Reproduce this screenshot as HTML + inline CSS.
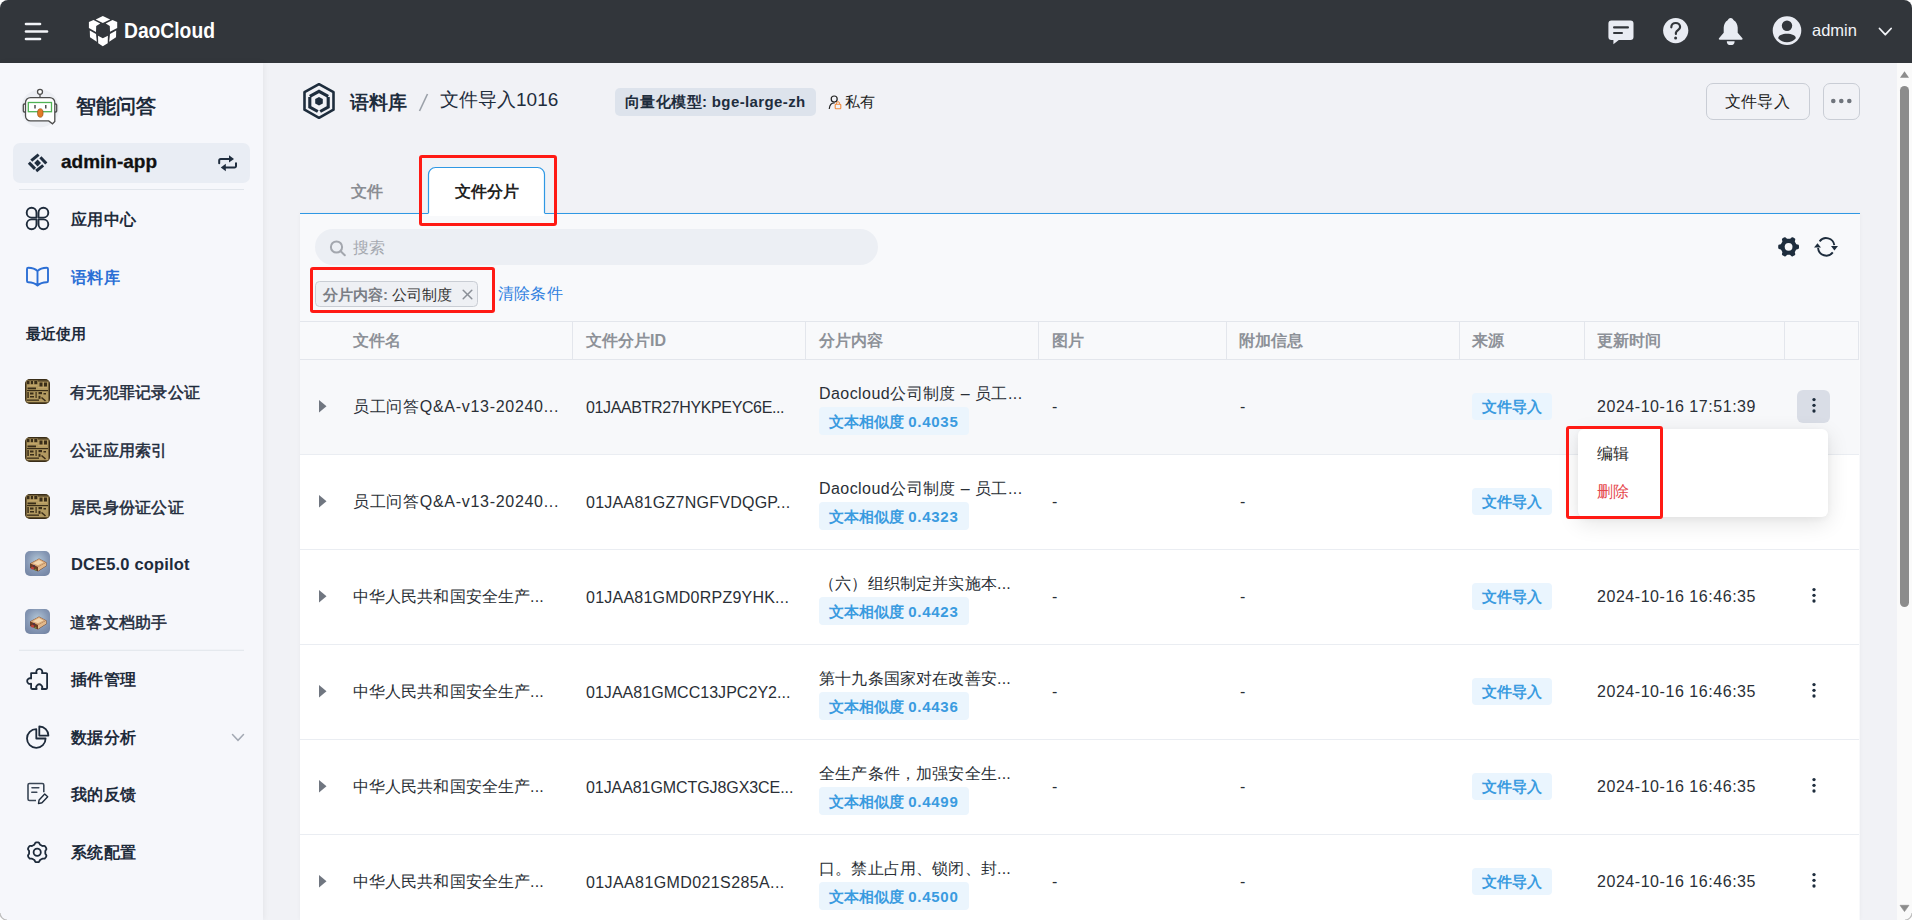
<!DOCTYPE html>
<html><head><meta charset="utf-8">
<style>
*{box-sizing:border-box;margin:0;padding:0}
html,body{width:1912px;height:920px;overflow:hidden;background:#fff;font-family:"Liberation Sans",sans-serif;color:#1f2d3d}
.a{position:absolute;white-space:nowrap}
#hdr{position:absolute;left:0;top:0;width:1912px;height:63px;background:#32363b;border-radius:8px 8px 0 0}
#side{position:absolute;left:0;top:63px;width:263px;height:857px;background:#f6f7fb;box-shadow:1px 0 6px rgba(0,0,0,.06)}
#main{position:absolute;left:263px;top:63px;width:1634px;height:857px;background:#f1f2f6}
#sb{position:absolute;left:1897px;top:63px;width:15px;height:857px;background:#fafafa}
.t{position:absolute;white-space:nowrap;line-height:20px}
</style></head><body>
<div id="hdr">
<svg class="a" style="left:0;top:0" width="1912" height="63" viewBox="0 0 1912 63">
<g stroke="#f2f4f8" stroke-width="2.6" stroke-linecap="round">
<line x1="26" y1="24" x2="40" y2="24"/><line x1="26" y1="31.5" x2="47" y2="31.5"/><line x1="26" y1="39" x2="40" y2="39"/>
</g>
<g fill="#ffffff">
<polygon points="102.8,15.9 110.2,19.4 102.8,22.9 95.7,19.4"/>
<polygon points="88.9,21.9 93.5,20.1 100.3,23.4 96.2,25.9 96,32 88.9,28.1"/>
<polygon points="117.2,21.9 112.5,20.1 105.7,23.4 109.8,26 110,31.8 117.2,28.1"/>
<polygon points="89.8,30.4 96,33.9 96.8,41.8 90,37.2"/>
<polygon points="116.2,30.4 110,33.9 109.2,41.8 116,37.2"/>
<polygon points="98,35.8 102.8,38.2 107.9,35.8 107.7,43.2 102.8,46.3 98.2,43.2"/>
</g>
<g fill="#e9ecf3">
<path d="M1611.4 20.5h19.1a3 3 0 0 1 3 3v13.5a3 3 0 0 1-3 3h-11.7l-5.4 4.2v-4.2h-2a3 3 0 0 1-3-3v-13.5a3 3 0 0 1 3-3z"/>
<circle cx="1675.7" cy="30.6" r="12.6"/>
<path d="M1730.7 18c-1.6 0-2.5 1.3-3.3 2.6c-2 1.2-3.5 3.6-3.7 7v5.2l-4.7 5.5c-.5.7-.1 1.5.8 1.5h21.8c.9 0 1.3-.8.8-1.5l-4.7-5.5v-5.2c-.2-3.4-1.7-5.8-3.7-7c-.8-1.3-1.7-2.6-3.3-2.6z"/>
<path d="M1726.8 41.2h7.8a3.9 3.9 0 0 1-7.8 0z"/>
<circle cx="1787" cy="30.6" r="14.3"/>
</g>
<g fill="#32363b">
<rect x="1613" y="26.3" width="16" height="2.3" rx="1.1"/>
<rect x="1613" y="31.9" width="10" height="2.1" rx="1"/>
<circle cx="1787" cy="25.8" r="5.2"/>
<path d="M1778.2 38.2c0-2.6 4-4.4 8.8-4.4s8.8 1.8 8.8 4.4c-2.2 2.6-5.3 4-8.8 4s-6.6-1.4-8.8-4z"/>
<circle cx="1675.6" cy="37.9" r="1.5"/>
</g>
<path d="M1671.3 27.3c0-2.7 2-4.3 4.4-4.3s4.4 1.6 4.4 4c0 2.9-3.4 3.2-4.2 5.8v1.2" fill="none" stroke="#32363b" stroke-width="2.2" stroke-linecap="round"/>
<path d="M1879.5 28.5l5.8 6.2 5.8-6.2" fill="none" stroke="#f2f4f8" stroke-width="1.8" stroke-linecap="round" stroke-linejoin="round"/>
</svg>
<div class="t" style="left:124px;top:19px;font-size:22px;line-height:24px;font-weight:bold;color:#fff;transform:scaleX(.875);transform-origin:0 0;letter-spacing:0">DaoCloud</div>
<div class="t" style="left:1812px;top:20px;font-size:16.5px;line-height:20px;color:#f2f4f8">admin</div>
</div>
<div id="main"></div>
<div id="mainc" style="position:absolute;left:0;top:0;width:1912px;height:920px">
<div class="a" style="left:300px;top:213px;width:1560px;height:707px;background:#f8f9fb;box-shadow:0 0 4px rgba(0,0,0,.04)"></div>
<svg class="a" style="left:0;top:0" width="1912" height="920" viewBox="0 0 1912 920">
<path d="M319 84.2L333.5 92.1V109.7L319 117.8L304.5 109.7V92.1Z" fill="none" stroke="#1e2d3d" stroke-width="2.6" stroke-linejoin="round"/>
<g fill="none" stroke="#1e2d3d" stroke-width="3.1">
<path d="M309.8 96.3L319 91.3L328.2 96.3"/>
<path d="M309.8 97V107L317.8 111.5"/>
<path d="M328.2 97V107L320.2 111.5"/>
</g>
<polygon points="319,96.9 322.8,99.1 322.8,103.4 319,105.6 315.2,103.4 315.2,99.1" fill="#1e2d3d"/>
<line x1="427.5" y1="94" x2="419.5" y2="111" stroke="#9aa0a8" stroke-width="1.6"/>
<g fill="none" stroke="#222" stroke-width="1.2" stroke-linecap="round">
<circle cx="834.2" cy="99" r="3"/>
<path d="M829.3 108.5c.5-3.6 2.3-5.6 4.9-5.6"/>
</g>
<rect x="835.2" y="104.2" width="5.6" height="4.6" rx=".8" fill="none" stroke="#f08a3c" stroke-width="1.1"/>
<path d="M836.5 104.2v-1a1.5 1.5 0 0 1 3 0v1" fill="none" stroke="#f08a3c" stroke-width="1"/>
<rect x="1706.5" y="83.5" width="103" height="36" rx="6.5" fill="none" stroke="#c9cdd5" stroke-width="1"/>
<rect x="1823.5" y="83.5" width="36" height="36" rx="6.5" fill="none" stroke="#c9cdd5" stroke-width="1"/>
<g fill="#6f747c"><circle cx="1833.3" cy="101" r="2.3"/><circle cx="1841.3" cy="101" r="2.3"/><circle cx="1849.3" cy="101" r="2.3"/></g>
<line x1="300" y1="213.5" x2="1860" y2="213.5" stroke="#2f98e4" stroke-width="1.2"/>
<path d="M428.5 214V174.5a7 7 0 0 1 7-7H537.5a7 7 0 0 1 7 7V214" fill="#fff" stroke="#2f98e4" stroke-width="1.2"/>
<rect x="428.5" y="213" width="116" height="3" fill="#fff"/>
<rect x="315" y="229" width="563" height="36" rx="18" fill="#eceff4"/>
<g fill="none" stroke="#a3a7ae" stroke-width="2" stroke-linecap="round"><circle cx="336.5" cy="247" r="5.6"/><line x1="340.7" y1="251.2" x2="344.8" y2="255.3"/></g>
<path d="M1799.0 246.8L1799.0 246.1L1798.9 245.4L1798.6 244.8L1797.5 244.4L1796.4 244.2L1796.0 243.7L1795.8 243.3L1795.5 242.8L1795.3 242.4L1795.0 241.9L1794.8 241.4L1795.1 240.3L1795.3 239.1L1794.9 238.6L1794.4 238.2L1793.8 237.8L1793.2 237.5L1792.6 237.2L1791.9 237.2L1791.0 237.9L1790.2 238.7L1789.6 238.8L1789.1 238.8L1788.6 238.8L1788.1 238.8L1787.6 238.8L1787.0 238.7L1786.2 237.9L1785.3 237.2L1784.6 237.2L1784.0 237.5L1783.4 237.8L1782.8 238.2L1782.3 238.6L1781.9 239.1L1782.1 240.3L1782.4 241.4L1782.2 241.9L1781.9 242.4L1781.7 242.8L1781.4 243.3L1781.2 243.7L1780.8 244.2L1779.7 244.4L1778.6 244.8L1778.3 245.4L1778.2 246.1L1778.2 246.8L1778.2 247.5L1778.3 248.2L1778.6 248.8L1779.7 249.2L1780.8 249.4L1781.2 249.9L1781.4 250.3L1781.7 250.8L1781.9 251.2L1782.2 251.7L1782.4 252.2L1782.1 253.3L1781.9 254.5L1782.3 255.0L1782.8 255.4L1783.4 255.8L1784.0 256.1L1784.6 256.4L1785.3 256.4L1786.2 255.7L1787.0 254.9L1787.6 254.8L1788.1 254.8L1788.6 254.8L1789.1 254.8L1789.6 254.8L1790.2 254.9L1791.0 255.7L1791.9 256.4L1792.6 256.4L1793.2 256.1L1793.8 255.8L1794.4 255.4L1794.9 255.0L1795.3 254.5L1795.1 253.3L1794.8 252.2L1795.0 251.7L1795.3 251.2L1795.5 250.8L1795.8 250.3L1796.0 249.9L1796.4 249.4L1797.5 249.2L1798.6 248.8L1798.9 248.2L1799.0 247.5Z" fill="#1e2d3d"/>
<circle cx="1788.6" cy="246.8" r="3.9" fill="#f7f8fa"/>
<g fill="none" stroke="#1e2d3d" stroke-width="1.9">
<path d="M1819.6 241.4A8.2 8.2 0 0 1 1834.3 245.2"/>
<path d="M1832.8 252.4A8.2 8.2 0 0 1 1818.1 248"/>
</g>
<g fill="#1e2d3d"><polygon points="1831,246 1838,246 1834.4,250.4"/><polygon points="1814,247.6 1821,247.6 1817.5,243.2"/></g>
<rect x="315.5" y="281.5" width="162" height="25" rx="4" fill="#eef0f4" stroke="#c9cdd4" stroke-width="1"/>
<g stroke="#8a8f97" stroke-width="1.5" stroke-linecap="round"><line x1="463.2" y1="290.2" x2="471.8" y2="298.8"/><line x1="471.8" y1="290.2" x2="463.2" y2="298.8"/></g>
</svg>
<div class="t" style="left:350px;top:92px;font-size:19px;line-height:22px;font-weight:bold;color:#1e2d3d;letter-spacing:0px;">语料库</div>
<div class="t" style="left:440px;top:89px;font-size:19px;line-height:22px;font-weight:normal;color:#1e2d3d;letter-spacing:0px;">文件导入1016</div>
<div class="a" style="left:615px;top:88px;width:201px;height:28px;border-radius:5px;background:#dde3ec"></div>
<div class="t" style="left:625px;top:91px;font-size:15px;line-height:22px;font-weight:bold;color:#1e2d3d;letter-spacing:0.38px;">向量化模型: bge-large-zh</div>
<div class="t" style="left:845px;top:91px;font-size:15px;line-height:22px;font-weight:normal;color:#222;letter-spacing:0px;">私有</div>
<div class="t" style="left:1725px;top:91px;font-size:16px;line-height:22px;font-weight:normal;color:#222;letter-spacing:0.2px;">文件导入</div>
<div class="t" style="left:351px;top:181px;font-size:16px;line-height:22px;font-weight:bold;color:#8a8d93;letter-spacing:0px;">文件</div>
<div class="t" style="left:455px;top:181px;font-size:16px;line-height:22px;font-weight:bold;color:#222;letter-spacing:0.1px;">文件分片</div>
<div class="t" style="left:353px;top:237px;font-size:16px;line-height:22px;font-weight:normal;color:#a5a9b0;letter-spacing:0px;">搜索</div>
<div class="t" style="left:323px;top:284px;font-size:15px;line-height:22px;font-weight:bold;color:#7a7e85;letter-spacing:0px;">分片内容:</div>
<div class="t" style="left:392px;top:284px;font-size:15px;line-height:22px;font-weight:normal;color:#333;letter-spacing:0px;">公司制度</div>
<div class="t" style="left:498px;top:283px;font-size:16px;line-height:22px;font-weight:normal;color:#2f80e0;letter-spacing:0.2px;">清除条件</div>
<div class="a" style="left:300px;top:321px;width:1559px;height:1px;background:#e3e6ec"></div>
<div class="a" style="left:300px;top:359px;width:1559px;height:1px;background:#e3e6ec"></div>
<div class="a" style="left:572px;top:322px;width:1px;height:37px;background:#e3e6ec"></div>
<div class="a" style="left:805px;top:322px;width:1px;height:37px;background:#e3e6ec"></div>
<div class="a" style="left:1038px;top:322px;width:1px;height:37px;background:#e3e6ec"></div>
<div class="a" style="left:1226px;top:322px;width:1px;height:37px;background:#e3e6ec"></div>
<div class="a" style="left:1459px;top:322px;width:1px;height:37px;background:#e3e6ec"></div>
<div class="a" style="left:1584px;top:322px;width:1px;height:37px;background:#e3e6ec"></div>
<div class="a" style="left:1784px;top:322px;width:1px;height:37px;background:#e3e6ec"></div>
<div class="a" style="left:1858px;top:322px;width:1px;height:37px;background:#e3e6ec"></div>
<div class="t" style="left:353px;top:331px;font-size:16px;line-height:20px;font-weight:bold;color:#8d9198;letter-spacing:0px;">文件名</div>
<div class="t" style="left:586px;top:331px;font-size:16px;line-height:20px;font-weight:bold;color:#8d9198;letter-spacing:0px;">文件分片ID</div>
<div class="t" style="left:819px;top:331px;font-size:16px;line-height:20px;font-weight:bold;color:#8d9198;letter-spacing:0px;">分片内容</div>
<div class="t" style="left:1052px;top:331px;font-size:16px;line-height:20px;font-weight:bold;color:#8d9198;letter-spacing:0px;">图片</div>
<div class="t" style="left:1239px;top:331px;font-size:16px;line-height:20px;font-weight:bold;color:#8d9198;letter-spacing:0px;">附加信息</div>
<div class="t" style="left:1472px;top:331px;font-size:16px;line-height:20px;font-weight:bold;color:#8d9198;letter-spacing:0px;">来源</div>
<div class="t" style="left:1597px;top:331px;font-size:16px;line-height:20px;font-weight:bold;color:#8d9198;letter-spacing:0px;">更新时间</div>
<div class="a" style="left:300px;top:360.0px;width:1559px;height:94px;background:#f7f8fa"></div>
<div class="a" style="left:300px;top:454.0px;width:1559px;height:1px;background:#eaedf2"></div>
<svg class="a" style="left:317px;top:398.5px" width="12" height="15" viewBox="0 0 12 15"><polygon points="2,1 9.5,7.3 2,13.6" fill="#707680"/></svg>
<div class="t" style="left:353px;top:396.5px;font-size:16px;line-height:20px;font-weight:normal;color:#2a2f36;letter-spacing:0.705px;">员工问答Q&amp;A-v13-20240...</div>
<div class="t" style="left:586px;top:397.5px;font-size:16px;line-height:20px;font-weight:normal;color:#2a2f36;letter-spacing:-0.37px;">01JAABTR27HYKPEYC6E...</div>
<div class="t" style="left:819px;top:383.5px;font-size:16px;line-height:20px;font-weight:normal;color:#2a2f36;letter-spacing:0.442px;">Daocloud公司制度 – 员工...</div>
<div class="a" style="left:819px;top:407.0px;width:150px;height:27.5px;border-radius:4px;background:#ebf5fd"></div>
<div class="t" style="left:829px;top:411.5px;font-size:15px;line-height:20px;font-weight:bold;color:#3a9be0;letter-spacing:0px;">文本相似度 <span style="letter-spacing:.75px">0.4035</span></div>
<div class="t" style="left:1052px;top:396.5px;font-size:16px;line-height:20px;font-weight:normal;color:#2a2f36;letter-spacing:0px;">-</div>
<div class="t" style="left:1240px;top:396.5px;font-size:16px;line-height:20px;font-weight:normal;color:#2a2f36;letter-spacing:0px;">-</div>
<div class="a" style="left:1472px;top:393.0px;width:80px;height:27px;border-radius:4px;background:#eaf5fe"></div>
<div class="t" style="left:1482px;top:396.5px;font-size:15px;line-height:20px;font-weight:bold;color:#3a9be0;letter-spacing:0px;">文件导入</div>
<div class="t" style="left:1597px;top:397.0px;font-size:16px;line-height:20px;font-weight:normal;color:#2a2f36;letter-spacing:0.55px;">2024-10-16 17:51:39</div>
<div class="a" style="left:1797px;top:390.0px;width:33px;height:33px;border-radius:6px;background:#d9dde6"></div>
<svg class="a" style="left:1808.5px;top:395.9px" width="10" height="20" viewBox="0 0 10 20"><g fill="#1e2d3d"><circle cx="5" cy="3.6" r="1.65"/><circle cx="5" cy="9.3" r="1.65"/><circle cx="5" cy="15" r="1.65"/></g></svg>
<div class="a" style="left:300px;top:455.0px;width:1559px;height:94px;background:#ffffff"></div>
<div class="a" style="left:300px;top:549.0px;width:1559px;height:1px;background:#eaedf2"></div>
<svg class="a" style="left:317px;top:493.5px" width="12" height="15" viewBox="0 0 12 15"><polygon points="2,1 9.5,7.3 2,13.6" fill="#707680"/></svg>
<div class="t" style="left:353px;top:491.5px;font-size:16px;line-height:20px;font-weight:normal;color:#2a2f36;letter-spacing:0.705px;">员工问答Q&amp;A-v13-20240...</div>
<div class="t" style="left:586px;top:492.5px;font-size:16px;line-height:20px;font-weight:normal;color:#2a2f36;letter-spacing:0.26px;">01JAA81GZ7NGFVDQGP...</div>
<div class="t" style="left:819px;top:478.5px;font-size:16px;line-height:20px;font-weight:normal;color:#2a2f36;letter-spacing:0.442px;">Daocloud公司制度 – 员工...</div>
<div class="a" style="left:819px;top:502.0px;width:150px;height:27.5px;border-radius:4px;background:#ebf5fd"></div>
<div class="t" style="left:829px;top:506.5px;font-size:15px;line-height:20px;font-weight:bold;color:#3a9be0;letter-spacing:0px;">文本相似度 <span style="letter-spacing:.75px">0.4323</span></div>
<div class="t" style="left:1052px;top:491.5px;font-size:16px;line-height:20px;font-weight:normal;color:#2a2f36;letter-spacing:0px;">-</div>
<div class="t" style="left:1240px;top:491.5px;font-size:16px;line-height:20px;font-weight:normal;color:#2a2f36;letter-spacing:0px;">-</div>
<div class="a" style="left:1472px;top:488.0px;width:80px;height:27px;border-radius:4px;background:#eaf5fe"></div>
<div class="t" style="left:1482px;top:491.5px;font-size:15px;line-height:20px;font-weight:bold;color:#3a9be0;letter-spacing:0px;">文件导入</div>
<div class="t" style="left:1597px;top:492.0px;font-size:16px;line-height:20px;font-weight:normal;color:#2a2f36;letter-spacing:0.55px;">2024-10-16 17:51:39</div>
<svg class="a" style="left:1808.5px;top:490.9px" width="10" height="20" viewBox="0 0 10 20"><g fill="#1e2d3d"><circle cx="5" cy="3.6" r="1.65"/><circle cx="5" cy="9.3" r="1.65"/><circle cx="5" cy="15" r="1.65"/></g></svg>
<div class="a" style="left:300px;top:550.0px;width:1559px;height:94px;background:#ffffff"></div>
<div class="a" style="left:300px;top:644.0px;width:1559px;height:1px;background:#eaedf2"></div>
<svg class="a" style="left:317px;top:588.5px" width="12" height="15" viewBox="0 0 12 15"><polygon points="2,1 9.5,7.3 2,13.6" fill="#707680"/></svg>
<div class="t" style="left:353px;top:586.5px;font-size:16px;line-height:20px;font-weight:normal;color:#2a2f36;letter-spacing:0.099px;">中华人民共和国安全生产...</div>
<div class="t" style="left:586px;top:587.5px;font-size:16px;line-height:20px;font-weight:normal;color:#2a2f36;letter-spacing:0.23px;">01JAA81GMD0RPZ9YHK...</div>
<div class="t" style="left:819px;top:573.5px;font-size:16px;line-height:20px;font-weight:normal;color:#2a2f36;letter-spacing:0.185px;">（六）组织制定并实施本...</div>
<div class="a" style="left:819px;top:597.0px;width:150px;height:27.5px;border-radius:4px;background:#ebf5fd"></div>
<div class="t" style="left:829px;top:601.5px;font-size:15px;line-height:20px;font-weight:bold;color:#3a9be0;letter-spacing:0px;">文本相似度 <span style="letter-spacing:.75px">0.4423</span></div>
<div class="t" style="left:1052px;top:586.5px;font-size:16px;line-height:20px;font-weight:normal;color:#2a2f36;letter-spacing:0px;">-</div>
<div class="t" style="left:1240px;top:586.5px;font-size:16px;line-height:20px;font-weight:normal;color:#2a2f36;letter-spacing:0px;">-</div>
<div class="a" style="left:1472px;top:583.0px;width:80px;height:27px;border-radius:4px;background:#eaf5fe"></div>
<div class="t" style="left:1482px;top:586.5px;font-size:15px;line-height:20px;font-weight:bold;color:#3a9be0;letter-spacing:0px;">文件导入</div>
<div class="t" style="left:1597px;top:587.0px;font-size:16px;line-height:20px;font-weight:normal;color:#2a2f36;letter-spacing:0.55px;">2024-10-16 16:46:35</div>
<svg class="a" style="left:1808.5px;top:585.9px" width="10" height="20" viewBox="0 0 10 20"><g fill="#1e2d3d"><circle cx="5" cy="3.6" r="1.65"/><circle cx="5" cy="9.3" r="1.65"/><circle cx="5" cy="15" r="1.65"/></g></svg>
<div class="a" style="left:300px;top:645.0px;width:1559px;height:94px;background:#ffffff"></div>
<div class="a" style="left:300px;top:739.0px;width:1559px;height:1px;background:#eaedf2"></div>
<svg class="a" style="left:317px;top:683.5px" width="12" height="15" viewBox="0 0 12 15"><polygon points="2,1 9.5,7.3 2,13.6" fill="#707680"/></svg>
<div class="t" style="left:353px;top:681.5px;font-size:16px;line-height:20px;font-weight:normal;color:#2a2f36;letter-spacing:0.099px;">中华人民共和国安全生产...</div>
<div class="t" style="left:586px;top:682.5px;font-size:16px;line-height:20px;font-weight:normal;color:#2a2f36;letter-spacing:0.038px;">01JAA81GMCC13JPC2Y2...</div>
<div class="t" style="left:819px;top:668.5px;font-size:16px;line-height:20px;font-weight:normal;color:#2a2f36;letter-spacing:0.185px;">第十九条国家对在改善安...</div>
<div class="a" style="left:819px;top:692.0px;width:150px;height:27.5px;border-radius:4px;background:#ebf5fd"></div>
<div class="t" style="left:829px;top:696.5px;font-size:15px;line-height:20px;font-weight:bold;color:#3a9be0;letter-spacing:0px;">文本相似度 <span style="letter-spacing:.75px">0.4436</span></div>
<div class="t" style="left:1052px;top:681.5px;font-size:16px;line-height:20px;font-weight:normal;color:#2a2f36;letter-spacing:0px;">-</div>
<div class="t" style="left:1240px;top:681.5px;font-size:16px;line-height:20px;font-weight:normal;color:#2a2f36;letter-spacing:0px;">-</div>
<div class="a" style="left:1472px;top:678.0px;width:80px;height:27px;border-radius:4px;background:#eaf5fe"></div>
<div class="t" style="left:1482px;top:681.5px;font-size:15px;line-height:20px;font-weight:bold;color:#3a9be0;letter-spacing:0px;">文件导入</div>
<div class="t" style="left:1597px;top:682.0px;font-size:16px;line-height:20px;font-weight:normal;color:#2a2f36;letter-spacing:0.55px;">2024-10-16 16:46:35</div>
<svg class="a" style="left:1808.5px;top:680.9px" width="10" height="20" viewBox="0 0 10 20"><g fill="#1e2d3d"><circle cx="5" cy="3.6" r="1.65"/><circle cx="5" cy="9.3" r="1.65"/><circle cx="5" cy="15" r="1.65"/></g></svg>
<div class="a" style="left:300px;top:740.0px;width:1559px;height:94px;background:#ffffff"></div>
<div class="a" style="left:300px;top:834.0px;width:1559px;height:1px;background:#eaedf2"></div>
<svg class="a" style="left:317px;top:778.5px" width="12" height="15" viewBox="0 0 12 15"><polygon points="2,1 9.5,7.3 2,13.6" fill="#707680"/></svg>
<div class="t" style="left:353px;top:776.5px;font-size:16px;line-height:20px;font-weight:normal;color:#2a2f36;letter-spacing:0.099px;">中华人民共和国安全生产...</div>
<div class="t" style="left:586px;top:777.5px;font-size:16px;line-height:20px;font-weight:normal;color:#2a2f36;letter-spacing:-0.076px;">01JAA81GMCTGJ8GX3CE...</div>
<div class="t" style="left:819px;top:763.5px;font-size:16px;line-height:20px;font-weight:normal;color:#2a2f36;letter-spacing:0.185px;">全生产条件，加强安全生...</div>
<div class="a" style="left:819px;top:787.0px;width:150px;height:27.5px;border-radius:4px;background:#ebf5fd"></div>
<div class="t" style="left:829px;top:791.5px;font-size:15px;line-height:20px;font-weight:bold;color:#3a9be0;letter-spacing:0px;">文本相似度 <span style="letter-spacing:.75px">0.4499</span></div>
<div class="t" style="left:1052px;top:776.5px;font-size:16px;line-height:20px;font-weight:normal;color:#2a2f36;letter-spacing:0px;">-</div>
<div class="t" style="left:1240px;top:776.5px;font-size:16px;line-height:20px;font-weight:normal;color:#2a2f36;letter-spacing:0px;">-</div>
<div class="a" style="left:1472px;top:773.0px;width:80px;height:27px;border-radius:4px;background:#eaf5fe"></div>
<div class="t" style="left:1482px;top:776.5px;font-size:15px;line-height:20px;font-weight:bold;color:#3a9be0;letter-spacing:0px;">文件导入</div>
<div class="t" style="left:1597px;top:777.0px;font-size:16px;line-height:20px;font-weight:normal;color:#2a2f36;letter-spacing:0.55px;">2024-10-16 16:46:35</div>
<svg class="a" style="left:1808.5px;top:775.9px" width="10" height="20" viewBox="0 0 10 20"><g fill="#1e2d3d"><circle cx="5" cy="3.6" r="1.65"/><circle cx="5" cy="9.3" r="1.65"/><circle cx="5" cy="15" r="1.65"/></g></svg>
<div class="a" style="left:300px;top:835.0px;width:1559px;height:94px;background:#ffffff"></div>
<div class="a" style="left:300px;top:929.0px;width:1559px;height:1px;background:#eaedf2"></div>
<svg class="a" style="left:317px;top:873.5px" width="12" height="15" viewBox="0 0 12 15"><polygon points="2,1 9.5,7.3 2,13.6" fill="#707680"/></svg>
<div class="t" style="left:353px;top:871.5px;font-size:16px;line-height:20px;font-weight:normal;color:#2a2f36;letter-spacing:0.099px;">中华人民共和国安全生产...</div>
<div class="t" style="left:586px;top:872.5px;font-size:16px;line-height:20px;font-weight:normal;color:#2a2f36;letter-spacing:0.395px;">01JAA81GMD021S285A...</div>
<div class="t" style="left:819px;top:858.5px;font-size:16px;line-height:20px;font-weight:normal;color:#2a2f36;letter-spacing:0.185px;">口。禁止占用、锁闭、封...</div>
<div class="a" style="left:819px;top:882.0px;width:150px;height:27.5px;border-radius:4px;background:#ebf5fd"></div>
<div class="t" style="left:829px;top:886.5px;font-size:15px;line-height:20px;font-weight:bold;color:#3a9be0;letter-spacing:0px;">文本相似度 <span style="letter-spacing:.75px">0.4500</span></div>
<div class="t" style="left:1052px;top:871.5px;font-size:16px;line-height:20px;font-weight:normal;color:#2a2f36;letter-spacing:0px;">-</div>
<div class="t" style="left:1240px;top:871.5px;font-size:16px;line-height:20px;font-weight:normal;color:#2a2f36;letter-spacing:0px;">-</div>
<div class="a" style="left:1472px;top:868.0px;width:80px;height:27px;border-radius:4px;background:#eaf5fe"></div>
<div class="t" style="left:1482px;top:871.5px;font-size:15px;line-height:20px;font-weight:bold;color:#3a9be0;letter-spacing:0px;">文件导入</div>
<div class="t" style="left:1597px;top:872.0px;font-size:16px;line-height:20px;font-weight:normal;color:#2a2f36;letter-spacing:0.55px;">2024-10-16 16:46:35</div>
<svg class="a" style="left:1808.5px;top:870.9px" width="10" height="20" viewBox="0 0 10 20"><g fill="#1e2d3d"><circle cx="5" cy="3.6" r="1.65"/><circle cx="5" cy="9.3" r="1.65"/><circle cx="5" cy="15" r="1.65"/></g></svg>
<div class="a" style="left:1578px;top:428.5px;width:250px;height:88.5px;border-radius:6px;background:#fff;box-shadow:0 6px 22px rgba(0,0,0,.11),0 2px 6px rgba(0,0,0,.04)"></div>
<div class="t" style="left:1597px;top:444px;font-size:16px;line-height:20px;font-weight:normal;color:#2a2a2a;letter-spacing:0px;">编辑</div>
<div class="t" style="left:1597px;top:482px;font-size:16px;line-height:20px;font-weight:normal;color:#e5484d;letter-spacing:0px;">删除</div>
<div class="a" style="left:418.7px;top:154.5px;width:138.40000000000003px;height:71.5px;border:3px solid #ff1a14;border-radius:3px"></div>
<div class="a" style="left:310px;top:267px;width:184.8px;height:46px;border:3px solid #ff1a14;border-radius:3px"></div>
<div class="a" style="left:1565.6px;top:425.6px;width:97.40000000000009px;height:93.39999999999998px;border:3px solid #ff1a14;border-radius:3px"></div>
<svg class="a" style="left:1897px;top:63px" width="15" height="857" viewBox="1897 63 15 857">
<rect x="1897" y="63" width="15" height="857" fill="#fafafa"/>
<polygon points="1900,77.8 1909,77.8 1904.5,71.2" fill="#8c8c8c"/>
<rect x="1900" y="86" width="9" height="521" rx="4.5" fill="#8c8c8c"/>
<polygon points="1900,905.3 1909,905.3 1904.5,911.6" fill="#8c8c8c" stroke="#8c8c8c" stroke-width=".6" stroke-linejoin="round"/>
</svg>
</div>
<div id="side">
<svg class="a" style="left:0;top:-63px" width="263" height="920" viewBox="0 0 263 920">
<circle cx="40" cy="108.5" r="19" fill="#eceef3"/>
<g stroke="#4d4d4d" stroke-width="1.3" fill="#fff">
<line x1="40" y1="94.3" x2="40" y2="97.6"/>
<circle cx="40" cy="91.8" r="2.5"/>
<rect x="23.3" y="104" width="3" height="8" rx="1"/>
<rect x="53.7" y="104" width="3" height="8" rx="1"/>
<path d="M30.5 97.6H49.8a5 5 0 0 1 5 5V121.5l-2.3 2.3-3.8-2.9H30.5a5 5 0 0 1-5-5V102.6a5 5 0 0 1 5-5z"/>
</g>
<rect x="28.3" y="102.5" width="23.2" height="9.2" fill="none" stroke="#4fb354" stroke-width="1.3"/>
<g stroke="#333" stroke-width="1.3"><line x1="35" y1="105" x2="35" y2="108.4"/><line x1="45.8" y1="105" x2="45.8" y2="108.4"/></g>
<ellipse cx="40.3" cy="113" rx="2.8" ry="4.3" fill="#e27a25" stroke="#8a4b12" stroke-width=".6"/>
<rect x="13" y="143" width="237" height="40" rx="7" fill="#e9edf4"/>
<g stroke="#1f2d3e" stroke-width="3" stroke-linecap="butt">
<line x1="31.3" y1="160.6" x2="38.6" y2="154.6"/>
<line x1="40.4" y1="157.2" x2="46.3" y2="163.6"/>
<line x1="28.9" y1="162.6" x2="35" y2="168.9"/>
<line x1="36.2" y1="171" x2="43.2" y2="165.4"/>
</g>
<rect x="35.2" y="160.6" width="4.8" height="4.8" transform="rotate(45 37.6 163)" fill="#1f2d3e"/>
<g fill="none" stroke="#1f2d3e" stroke-width="2" stroke-linecap="round" stroke-linejoin="round">
<path d="M219.2 163.2V160.5a1.5 1.5 0 0 1 1.5-1.5H229.5"/>
<path d="M236 163.3V166a1.5 1.5 0 0 1-1.5 1.5H225"/>
</g>
<g fill="#1f2d3e">
<polygon points="229,155.2 234,158.9 229,162.6"/>
<polygon points="225.8,163.8 220.8,167.5 225.8,171.2"/>
</g>
<line x1="19" y1="189.5" x2="244" y2="189.5" stroke="#e1e5eb" stroke-width="1"/>
<g fill="none" stroke="#1e2b3b" stroke-width="1.9" stroke-linejoin="round">
<path d="M36.5 217.6H31.6A4.9 4.9 0 1 1 36.5 212.7Z"/>
<path d="M38.5 217.6H43.4A4.9 4.9 0 1 0 38.5 212.7Z"/>
<path d="M36.5 219.4H31.6A4.9 4.9 0 1 0 36.5 224.3Z"/>
<path d="M38.5 219.4H43.4A4.9 4.9 0 1 1 38.5 224.3Z"/>
</g>
<path d="M37.5 271.2C35.2 268.7 31.5 267.8 28.3 267.8a1.3 1.3 0 0 0-1.3 1.3V281a1.3 1.3 0 0 0 1.3 1.3C31.6 282.3 35 283.2 37.5 285.6C40 283.2 43.4 282.3 46.7 282.3a1.3 1.3 0 0 0 1.3-1.3V269.1a1.3 1.3 0 0 0-1.3-1.3C43.5 267.8 39.8 268.7 37.5 271.2ZM37.5 271.2V285.6" fill="none" stroke="#2c6fd5" stroke-width="1.9" stroke-linejoin="round"/>
<line x1="19" y1="650.3" x2="244" y2="650.3" stroke="#e1e5eb" stroke-width="1"/>
<g fill="none" stroke="#1e2b3b" stroke-width="1.8" stroke-linejoin="round">
<path d="M31.1 673.2H36.6A3 3 0 1 1 42 673.2H46.2A.9 .9 0 0 1 47.1 674.1V688.1A.9 .9 0 0 1 46.2 689H41.8A3 3 0 1 0 36.7 689H32A.9 .9 0 0 1 31.1 688.1V683.6A2.8 2.8 0 1 1 31.1 678.5Z"/>
<path d="M36.3 729.2A9.3 9.3 0 1 0 45.6 738.5H36.3Z"/>
<path d="M39.3 735.6V726.5A9.1 9.1 0 0 1 48.4 735.6Z"/>
<path d="M36 800.5H29.5A1.5 1.5 0 0 1 28 799V785A1.5 1.5 0 0 1 29.5 783.5H42.3A1.5 1.5 0 0 1 43.8 785V792.3" stroke="#3a4656" stroke-width="1.6"/>
<polygon points="38.5,803.6 42,802.7 47.7,796.8 44.7,794 39.1,799.9" stroke-width="1.4"/>
<path d="M45.3 852.3L45.3 851.8L45.3 851.2L45.4 850.7L45.9 850.0L46.4 849.2L46.3 848.5L46.1 847.9L45.8 847.3L45.4 846.8L45.0 846.3L44.5 845.9L43.6 845.9L42.7 846.0L42.2 845.8L41.7 845.6L41.2 845.3L40.8 845.0L40.3 844.8L39.9 844.4L39.5 843.6L39.1 842.8L38.5 842.5L37.8 842.4L37.2 842.4L36.6 842.4L35.9 842.5L35.3 842.8L34.9 843.6L34.5 844.4L34.1 844.8L33.6 845.0L33.2 845.3L32.7 845.6L32.2 845.8L31.7 846.0L30.8 845.9L29.9 845.9L29.4 846.3L29.0 846.8L28.6 847.3L28.3 847.9L28.1 848.5L28.0 849.2L28.5 850.0L29.0 850.7L29.1 851.2L29.1 851.8L29.1 852.3L29.1 852.8L29.1 853.4L29.0 853.9L28.5 854.6L28.0 855.4L28.1 856.1L28.3 856.7L28.6 857.2L29.0 857.8L29.4 858.3L29.9 858.7L30.8 858.7L31.7 858.6L32.2 858.8L32.7 859.0L33.1 859.3L33.6 859.6L34.1 859.8L34.5 860.2L34.9 861.0L35.3 861.8L35.9 862.1L36.6 862.2L37.2 862.2L37.8 862.2L38.5 862.1L39.1 861.8L39.5 861.0L39.9 860.2L40.3 859.8L40.8 859.6L41.2 859.3L41.7 859.0L42.2 858.8L42.7 858.6L43.6 858.7L44.5 858.7L45.0 858.3L45.4 857.8L45.8 857.2L46.1 856.7L46.3 856.1L46.4 855.4L45.9 854.6L45.4 853.9L45.3 853.4L45.3 852.8Z"/>
<circle cx="37.2" cy="852.3" r="3.6"/>
</g>
<g stroke="#3a4656" stroke-width="1.6" stroke-linecap="round"><line x1="32" y1="787.8" x2="38.8" y2="787.8"/><line x1="31.8" y1="792.3" x2="36.8" y2="792.3"/></g>
<path d="M232.5 734.5l5.5 5.8 5.5-5.8" fill="none" stroke="#a3a9b3" stroke-width="1.5" stroke-linecap="round"/>
</svg>
<div class="t" style="left:76px;top:32px;font-size:20px;line-height:22px;font-weight:bold;color:#1e2b3b;letter-spacing:0px;">智能问答</div>
<div class="t" style="left:61px;top:88px;font-size:19px;line-height:22px;font-weight:bold;color:#111;letter-spacing:0px;-webkit-text-stroke:.3px #111">admin-app</div>
<div class="t" style="left:71px;top:146px;font-size:16px;line-height:22px;font-weight:bold;color:#1e2b3b;letter-spacing:0.25px;">应用中心</div>
<div class="t" style="left:71px;top:204px;font-size:16px;line-height:22px;font-weight:bold;color:#2c6fd5;letter-spacing:0.25px;">语料库</div>
<div class="t" style="left:26px;top:260px;font-size:15px;line-height:22px;font-weight:bold;color:#1e2b3b;letter-spacing:0px;">最近使用</div>
<div class="t" style="left:70px;top:318.5px;font-size:16px;line-height:22px;font-weight:500;color:#1e2b3b;letter-spacing:0.25px;-webkit-text-stroke:.5px #1e2b3b">有无犯罪记录公证</div>
<div class="a" style="left:25px;top:315.5px;width:25px;height:25px;border-radius:5px;background:#b29a62;overflow:hidden"><svg width="25" height="25" viewBox="0 0 25 25"><g fill="#241a0c" opacity=".85"><rect x="0" y="0" width="25" height="1.5"/><rect x="0" y="0" width="1.5" height="25"/><rect x="23.5" y="0" width="1.5" height="25"/><rect x="0" y="23.3" width="25" height="1.7"/><rect x="2" y="2" width="2.5" height="3.2"/><rect x="5.8" y="2" width="2.2" height="3.2"/><rect x="9.3" y="2" width="3" height="3.2"/><rect x="2.5" y="8.5" width="8.5" height="1.8"/><rect x="14.5" y="3.5" width="3" height="4"/><rect x="19" y="3.5" width="3" height="4"/><rect x="13" y="1.5" width="10" height="1"/><rect x="2" y="11" width="21" height="1.2"/><rect x="2.3" y="13" width="1.5" height="6"/><rect x="5" y="13.5" width="3.5" height="2"/><rect x="5" y="17" width="4" height="1.5"/><rect x="10.5" y="13" width="1.2" height="6"/><rect x="13.5" y="13" width="3.5" height="2.2"/><rect x="13.5" y="16.8" width="2" height="3"/><rect x="18.5" y="14" width="2.5" height="1.5"/><path d="M17 18l4 3.5-1 1-4-3.5z"/><rect x="2" y="20.5" width="12" height="1.3"/></g><g fill="#d2b070" opacity=".55"><rect x="4.5" y="5.8" width="8" height="1.4"/><rect x="13" y="8" width="9" height="1.2"/></g></svg></div>
<div class="t" style="left:70px;top:376.5px;font-size:16px;line-height:22px;font-weight:500;color:#1e2b3b;letter-spacing:0.25px;-webkit-text-stroke:.5px #1e2b3b">公证应用索引</div>
<div class="a" style="left:25px;top:373.5px;width:25px;height:25px;border-radius:5px;background:#b29a62;overflow:hidden"><svg width="25" height="25" viewBox="0 0 25 25"><g fill="#241a0c" opacity=".85"><rect x="0" y="0" width="25" height="1.5"/><rect x="0" y="0" width="1.5" height="25"/><rect x="23.5" y="0" width="1.5" height="25"/><rect x="0" y="23.3" width="25" height="1.7"/><rect x="2" y="2" width="2.5" height="3.2"/><rect x="5.8" y="2" width="2.2" height="3.2"/><rect x="9.3" y="2" width="3" height="3.2"/><rect x="2.5" y="8.5" width="8.5" height="1.8"/><rect x="14.5" y="3.5" width="3" height="4"/><rect x="19" y="3.5" width="3" height="4"/><rect x="13" y="1.5" width="10" height="1"/><rect x="2" y="11" width="21" height="1.2"/><rect x="2.3" y="13" width="1.5" height="6"/><rect x="5" y="13.5" width="3.5" height="2"/><rect x="5" y="17" width="4" height="1.5"/><rect x="10.5" y="13" width="1.2" height="6"/><rect x="13.5" y="13" width="3.5" height="2.2"/><rect x="13.5" y="16.8" width="2" height="3"/><rect x="18.5" y="14" width="2.5" height="1.5"/><path d="M17 18l4 3.5-1 1-4-3.5z"/><rect x="2" y="20.5" width="12" height="1.3"/></g><g fill="#d2b070" opacity=".55"><rect x="4.5" y="5.8" width="8" height="1.4"/><rect x="13" y="8" width="9" height="1.2"/></g></svg></div>
<div class="t" style="left:70px;top:433.5px;font-size:16px;line-height:22px;font-weight:500;color:#1e2b3b;letter-spacing:0.25px;-webkit-text-stroke:.5px #1e2b3b">居民身份证公证</div>
<div class="a" style="left:25px;top:430.5px;width:25px;height:25px;border-radius:5px;background:#b29a62;overflow:hidden"><svg width="25" height="25" viewBox="0 0 25 25"><g fill="#241a0c" opacity=".85"><rect x="0" y="0" width="25" height="1.5"/><rect x="0" y="0" width="1.5" height="25"/><rect x="23.5" y="0" width="1.5" height="25"/><rect x="0" y="23.3" width="25" height="1.7"/><rect x="2" y="2" width="2.5" height="3.2"/><rect x="5.8" y="2" width="2.2" height="3.2"/><rect x="9.3" y="2" width="3" height="3.2"/><rect x="2.5" y="8.5" width="8.5" height="1.8"/><rect x="14.5" y="3.5" width="3" height="4"/><rect x="19" y="3.5" width="3" height="4"/><rect x="13" y="1.5" width="10" height="1"/><rect x="2" y="11" width="21" height="1.2"/><rect x="2.3" y="13" width="1.5" height="6"/><rect x="5" y="13.5" width="3.5" height="2"/><rect x="5" y="17" width="4" height="1.5"/><rect x="10.5" y="13" width="1.2" height="6"/><rect x="13.5" y="13" width="3.5" height="2.2"/><rect x="13.5" y="16.8" width="2" height="3"/><rect x="18.5" y="14" width="2.5" height="1.5"/><path d="M17 18l4 3.5-1 1-4-3.5z"/><rect x="2" y="20.5" width="12" height="1.3"/></g><g fill="#d2b070" opacity=".55"><rect x="4.5" y="5.8" width="8" height="1.4"/><rect x="13" y="8" width="9" height="1.2"/></g></svg></div>
<div class="t" style="left:71px;top:490px;font-size:16.5px;line-height:22px;font-weight:bold;color:#1e2b3b;letter-spacing:0.15px;">DCE5.0 copilot</div>
<div class="a" style="left:25px;top:487.5px;width:25px;height:25px;border-radius:5px;background:radial-gradient(circle at 50% 40%,#b4c8d8,#8597b4 55%,#6f7f9e);overflow:hidden"><svg width="25" height="25" viewBox="0 0 25 25"><polygon points="5,12.5 14,7.5 21.5,11.5 21.5,15 13,20.5 5,17" fill="#6b3d24"/><polygon points="5.5,12.5 14,7.8 21,11.5 13,16" fill="#d9a878"/><polygon points="8,12.3 14,9 18.5,11.5 13,14.3" fill="#f3d7ae"/><polygon points="13,16 21.2,11.6 21.2,14.8 13,20" fill="#e3b98a"/><circle cx="7.5" cy="17.2" r="1.4" fill="#c0433a"/><circle cx="10.5" cy="18.8" r="1" fill="#6e8a3a"/><circle cx="9" cy="15" r="1" fill="#4a3050"/></svg></div>
<div class="t" style="left:70px;top:548.5px;font-size:16px;line-height:22px;font-weight:500;color:#1e2b3b;letter-spacing:0.25px;-webkit-text-stroke:.5px #1e2b3b">道客文档助手</div>
<div class="a" style="left:25px;top:545.5px;width:25px;height:25px;border-radius:5px;background:radial-gradient(circle at 50% 40%,#b4c8d8,#8597b4 55%,#6f7f9e);overflow:hidden"><svg width="25" height="25" viewBox="0 0 25 25"><polygon points="5,12.5 14,7.5 21.5,11.5 21.5,15 13,20.5 5,17" fill="#6b3d24"/><polygon points="5.5,12.5 14,7.8 21,11.5 13,16" fill="#d9a878"/><polygon points="8,12.3 14,9 18.5,11.5 13,14.3" fill="#f3d7ae"/><polygon points="13,16 21.2,11.6 21.2,14.8 13,20" fill="#e3b98a"/><circle cx="7.5" cy="17.2" r="1.4" fill="#c0433a"/><circle cx="10.5" cy="18.8" r="1" fill="#6e8a3a"/><circle cx="9" cy="15" r="1" fill="#4a3050"/></svg></div>
<div class="t" style="left:71px;top:606px;font-size:16px;line-height:22px;font-weight:bold;color:#1e2b3b;letter-spacing:0.25px;">插件管理</div>
<div class="t" style="left:71px;top:664px;font-size:16px;line-height:22px;font-weight:bold;color:#1e2b3b;letter-spacing:0.25px;">数据分析</div>
<div class="t" style="left:71px;top:721px;font-size:16px;line-height:22px;font-weight:bold;color:#1e2b3b;letter-spacing:0.25px;">我的反馈</div>
<div class="t" style="left:71px;top:779px;font-size:16px;line-height:22px;font-weight:bold;color:#1e2b3b;letter-spacing:0.25px;">系统配置</div>
</div>
<svg class="a" style="left:0;top:908px" width="12" height="12" viewBox="0 908 12 12"><path d="M0 913A7 7 0 0 0 7 920H0Z" fill="#fff"/><path d="M0 913A7 7 0 0 0 7 920" fill="none" stroke="#bdbdbd" stroke-width="1.2"/></svg><svg class="a" style="left:1900px;top:908px" width="12" height="12" viewBox="1900 908 12 12"><path d="M1912 913A7 7 0 0 1 1905 920H1912Z" fill="#fff"/><path d="M1912 913A7 7 0 0 1 1905 920" fill="none" stroke="#bdbdbd" stroke-width="1.2"/></svg>
</body></html>
